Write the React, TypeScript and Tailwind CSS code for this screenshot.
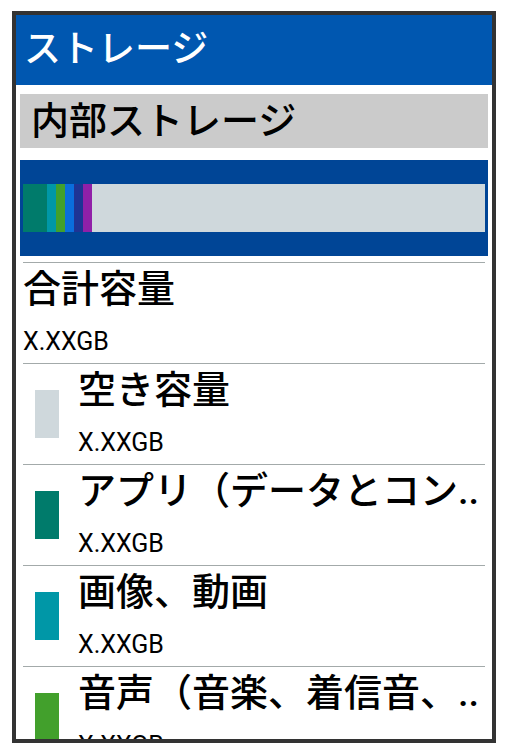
const font = "font-['Roboto','Noto_Sans_CJK_JP',sans-serif]";

type Item = { label: string; color?: string };

const items: Item[] = [
  { label: "合計容量" },
  { label: "空き容量", color: "bg-[#cfd8dc]" },
  { label: "アプリ（データとコン..", color: "bg-[#007b6b]" },
  { label: "画像、動画", color: "bg-[#0097a7]" },
  { label: "音声（音楽、着信音、..", color: "bg-[#42a02c]" },
];

function Row({ item }: { item: Item }) {
  return (
    <div className="mx-[7px] flex h-[101px] items-center border-t border-[#a3aaaa]">
      {item.color && (
        <div className="ml-[12px] mr-[19px] h-[48px] w-[24px] shrink-0">
          <div className={`h-full w-full ${item.color}`}></div>
        </div>
      )}
      <div className="flex h-full min-w-0 flex-1 flex-col pt-[2px]">
        <div className="whitespace-nowrap text-[38px] font-medium leading-[48px] text-black">
          {item.label}
        </div>
        <div className="mt-[16px] text-[25px] leading-[25px] text-black">X.XXGB</div>
      </div>
    </div>
  );
}

export default function App() {
  return (
    <div className={`min-h-screen bg-white pl-[12px] pt-[11px] ${font}`}>
      <div className="flex h-[732px] w-[484px] flex-col overflow-hidden border-4 border-[#333333] bg-white">
        <div className="flex h-[70px] shrink-0 items-center bg-[#0057b0] pl-[8px] text-[37px] font-medium leading-[48px] text-white">
          ストレージ
        </div>
        <div className="mx-[4px] mt-[9px] flex h-[54px] shrink-0 items-center bg-[#cbcbcb] pl-[11px] text-[38px] font-medium leading-[48px] text-black">
          内部ストレージ
        </div>
        <div className="mx-[4px] mt-[12px] h-[96px] shrink-0 bg-[#004596] px-[3px] py-[24px]">
          <div className="flex h-[48px] bg-[#cfd8dc]">
            <div className="w-[24px] bg-[#007b6b]"></div>
            <div className="w-[9px] bg-[#0097a7]"></div>
            <div className="w-[9px] bg-[#42a02c]"></div>
            <div className="w-[9px] bg-[#0a6edc]"></div>
            <div className="w-[9px] bg-[#1e3494]"></div>
            <div className="w-[9px] bg-[#9020a8]"></div>
          </div>
        </div>
        <div className="mt-[6px] shrink-0">
          {items.map((it) => (
            <Row key={it.label} item={it} />
          ))}
        </div>
      </div>
    </div>
  );
}
